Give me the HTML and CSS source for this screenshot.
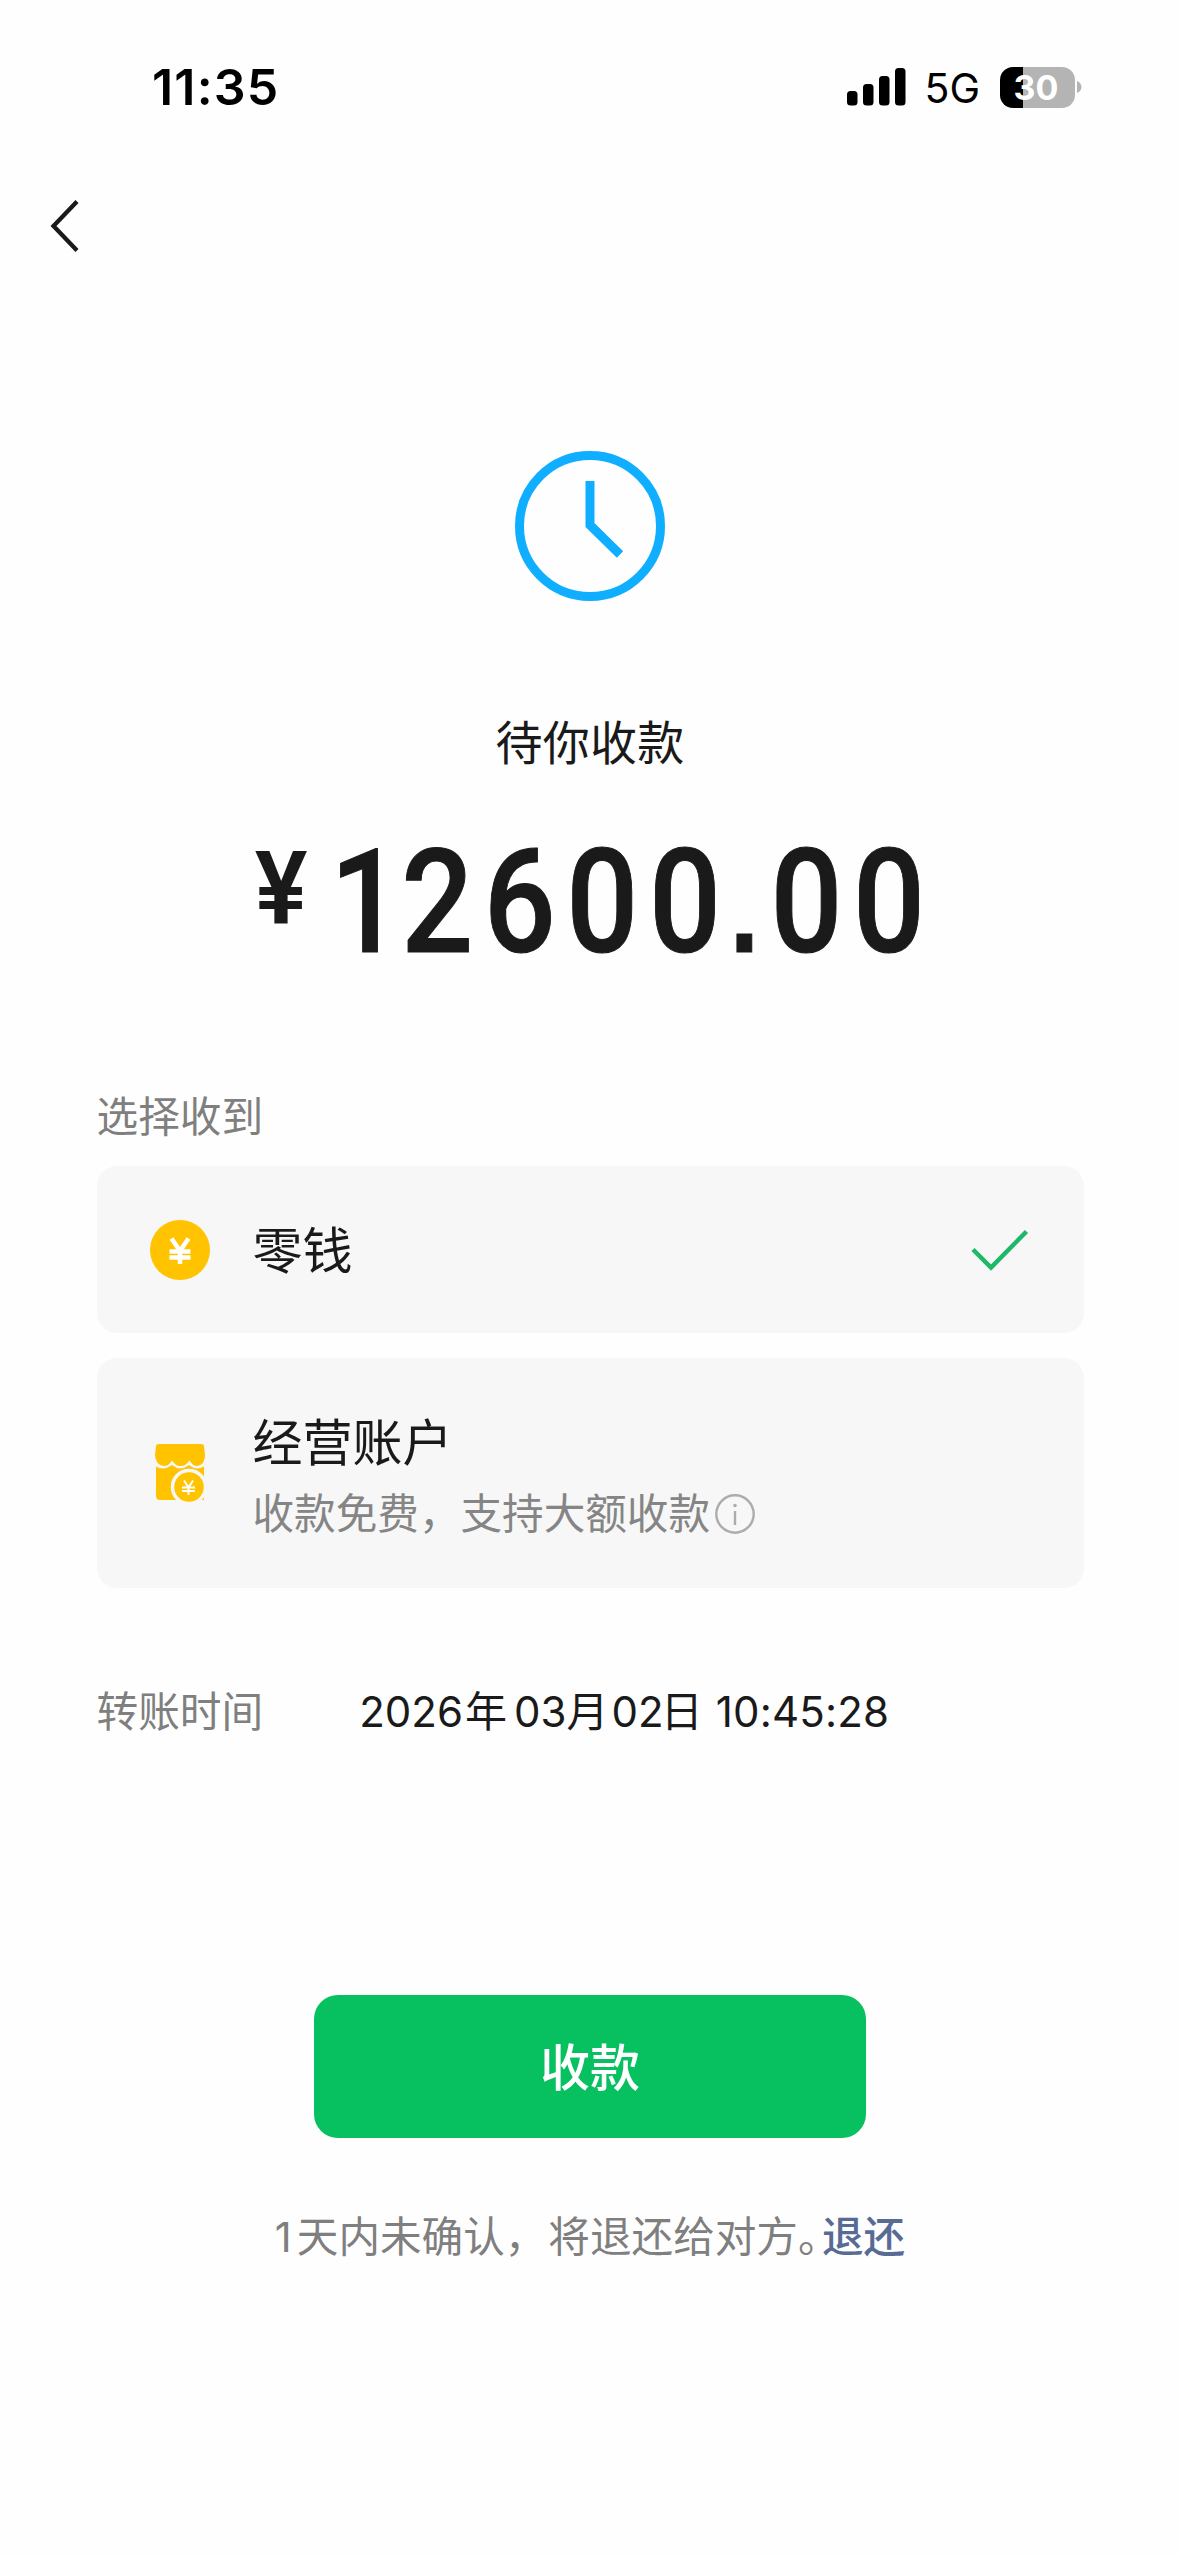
FILE: index.html
```html
<!DOCTYPE html>
<html lang="zh-CN">
<head>
<meta charset="utf-8">
<meta name="viewport" content="width=device-width">
<title>收款</title>
<link rel="stylesheet" href="styles.css">
</head>
<body>
<div class="screen">
  <header class="status">
    <span class="clock">11:35</span>
    <div class="indicators">
      <svg class="signal" width="59" height="38" viewBox="0 0 59 38"><rect x="0" y="23" width="10.5" height="14.5" rx="3.5"/><rect x="16" y="16" width="10.5" height="21.5" rx="3.5"/><rect x="32" y="8" width="10.5" height="29.5" rx="3.5"/><rect x="48" y="0" width="10.5" height="37.5" rx="3.5"/></svg>
      <span class="network">5G</span>
      <div class="battery"><span class="level">30</span></div>
      <svg class="tip" width="5" height="12" viewBox="0 0 5 12"><path d="M0 0C6 2 6 10 0 12Z"/></svg>
    </div>
  </header>
  <nav class="nav">
    <svg width="30" height="54" viewBox="0 0 30 54"><path d="M27 2.5 3.5 27 27 51.5"/></svg>
  </nav>
  <main class="content">
    <svg class="pending" width="150" height="150" viewBox="0 0 150 150"><circle cx="75" cy="75" r="70.5"/><path d="M75 30V74L105 103.500"/></svg>
    <h1 class="title">待你收款</h1>
    <div class="amount"><span class="yen">¥</span><span class="digits"><span class="one">1</span>2600<span class="dot">.</span>00</span></div>
    <section class="accounts">
      <h2 class="label">选择收到</h2>
      <div class="card">
        <svg class="icon" width="60" height="60" viewBox="0 0 60 60"><circle class="gold" cx="30" cy="30" r="30"/><path class="coin" d="M21.500 18.500 30 31 38.500 18.500M19.500 31.500H40.500M19.500 37.500H40.500M30 30V44"/></svg>
        <span class="name">零钱</span>
        <svg class="check" width="58" height="42" viewBox="0 0 58 42"><path d="M2 20.500 20 38.500 55.500 2.500"/></svg>
      </div>
      <div class="card tall">
        <svg class="icon" width="60" height="60" viewBox="0 0 60 60"><path class="gold" d="M8.500 1H51.500Q53.500 1 54 3L55 12Q55 22 47 23Q43 23 39.500 17.500Q35 23.500 30 23Q26 23 22 17.500Q18.500 23 14 23Q5.500 22 5 12L6 3Q6.500 1 8.500 1Z"/><path class="gold" d="M6 23.500Q14 28 22 22Q30 29 39 22Q46 28 54 23.500V57H10Q6 57 6 53Z"/><circle class="gold rim" cx="39" cy="44" r="16.500"/><path class="mini" d="M34 37.500 38.500 44.500 43 37.500M32 44.500H45M32 48H45M38.500 44V52"/></svg>
        <div class="texts">
          <span class="name">经营账户</span>
          <span class="note">收款免费，支持大额收款<svg class="info" width="40" height="40" viewBox="0 0 40 40"><circle cx="20" cy="20" r="18.700"/><path d="M20 17V31"/><circle class="point" cx="20" cy="11.500" r="1.800"/></svg></span>
        </div>
      </div>
    </section>
    <div class="time"><span class="label">转账时间</span><span class="value"><span class="year">2026</span><span>年</span><span class="month">03</span><span>月</span><span class="day">02</span><span class="ri">日</span><span class="hour">10:45:28</span></span></div>
    <button class="accept">收款</button>
    <p class="hint"><span class="count">1</span><span>天内未确认，</span><span class="rest">将退还给对方</span><span class="stop">。</span><a class="refund">退还</a></p>
  </main>
</div>
</body>
</html>
```
FILE: styles.css
```css
* { box-sizing: border-box; margin: 0; padding: 0; }
body {
  background: #fefefe;
  color: #1a1a1a;
  font-family: Inter, "Noto Sans CJK SC", sans-serif;
}
svg { display: block; flex: none; }
.screen { width: 1180px; height: 2556px; display: flex; flex-direction: column; }
.status {
  height: 174px;
  padding: 0 98px 0 152px;
  display: flex;
  align-items: center;
  justify-content: space-between;
  color: #000;
}
.clock { font-size: 50px; font-weight: 600; line-height: 60px; letter-spacing: 1.2px; }
.indicators { display: flex; align-items: center; }
.network { font-size: 41px; line-height: 40px; margin: 2px 20px 0 18px; }
.battery {
  width: 75px;
  height: 41px;
  border-radius: 13px;
  background: linear-gradient(90deg, #000 23px, #b4b4b4 23px);
  display: flex;
  align-items: center;
  justify-content: center;
}
.level { color: #fff; font-size: 34px; font-weight: 700; line-height: 41px; margin-right: 3px; }
.tip { margin-left: 2px; fill: #b4b4b4; }
.nav { height: 104px; padding: 25px 0 0 50px; }
.nav path { fill: none; stroke: #1a1a1a; stroke-width: 4.3; }
.content { display: flex; flex-direction: column; align-items: center; }
.pending { margin-top: 173px; fill: none; stroke: #10aeff; stroke-width: 9; }
.title { margin-top: 112px; font-size: 47px; font-weight: 400; line-height: 60px; letter-spacing: 0.3px; }
.amount {
  width: 680px;
  height: 106px;
  margin-top: 76px;
  display: flex;
  align-items: flex-start;
  font-family: Roboto, sans-serif;
  font-weight: 500;
}
.yen { flex: none; margin-right: 21px; padding-left: 5px; font-size: 102px; font-weight: 600; line-height: 80px; transform: scaleX(0.97); transform-origin: left; }
.digits { flex: none; font-size: 144px; line-height: 107px; letter-spacing: 12px; white-space: nowrap; transform: scaleX(0.88); transform-origin: left; -webkit-text-stroke: 1px #1a1a1a; }
.one { letter-spacing: -1px; }
.dot {
  margin-left: -2px;
  font-family: "Liberation Sans", sans-serif;
  font-size: 120px;
  font-weight: 700;
  line-height: 0;
  letter-spacing: 13px;
}
.accounts { width: 987px; margin-top: 137px; display: flex; flex-direction: column; gap: 24px; }
.label { font-size: 41.7px; font-weight: 400; line-height: 50px; color: #7f7f7f; }
.card {
  height: 167px;
  padding: 0 55px 0 53px;
  border-radius: 20px;
  background: #f7f7f7;
  display: flex;
  align-items: center;
}
.tall { height: 230px; margin-top: 1px; }
.icon { margin-right: 43px; }
.name { padding-top: 2px; font-size: 50px; line-height: 60px; }
.check { margin-left: auto; fill: none; stroke: #1fb86a; stroke-width: 4.5; }
.gold { fill: #ffc300; }
.coin { fill: none; stroke: #fff; stroke-width: 4.5; }
.rim { stroke: #f7f7f7; stroke-width: 3.5; }
.mini { fill: none; stroke: #fff; stroke-width: 2; }
.texts { display: flex; flex-direction: column; gap: 11px; padding-top: 9px; }
.note { display: flex; align-items: center; font-size: 41.6px; line-height: 60px; color: #858585; }
.info { margin-left: 5px; fill: none; stroke: #acacac; stroke-width: 2.4; }
.info .point { fill: #acacac; stroke: none; }
.time { width: 987px; margin-top: 99px; display: flex; font-size: 42px; line-height: 50px; }
.value { display: flex; margin-left: 96px; }
.year { margin-right: 2px; }
.month { margin-left: 7px; }
.day { margin-left: 3px; }
.ri { margin-left: -3px; }
.hour { margin-left: 13px; letter-spacing: 0.2px; }
.accept {
  width: 552px;
  height: 143px;
  margin-top: 258px;
  padding-top: 2px;
  border: 0;
  border-radius: 24px;
  background: #07c160;
  color: #fff;
  font: 500 50px/60px Inter, "Noto Sans CJK SC", sans-serif;
}
.hint { margin-top: 69px; display: flex; font-size: 41.6px; line-height: 60px; color: #7f7f7f; }
.count { margin-right: 5px; }
.rest { margin-left: 2px; }
.stop { width: 24px; font-feature-settings: "halt"; }
.refund { color: #576b95; font-weight: 500; }
```
